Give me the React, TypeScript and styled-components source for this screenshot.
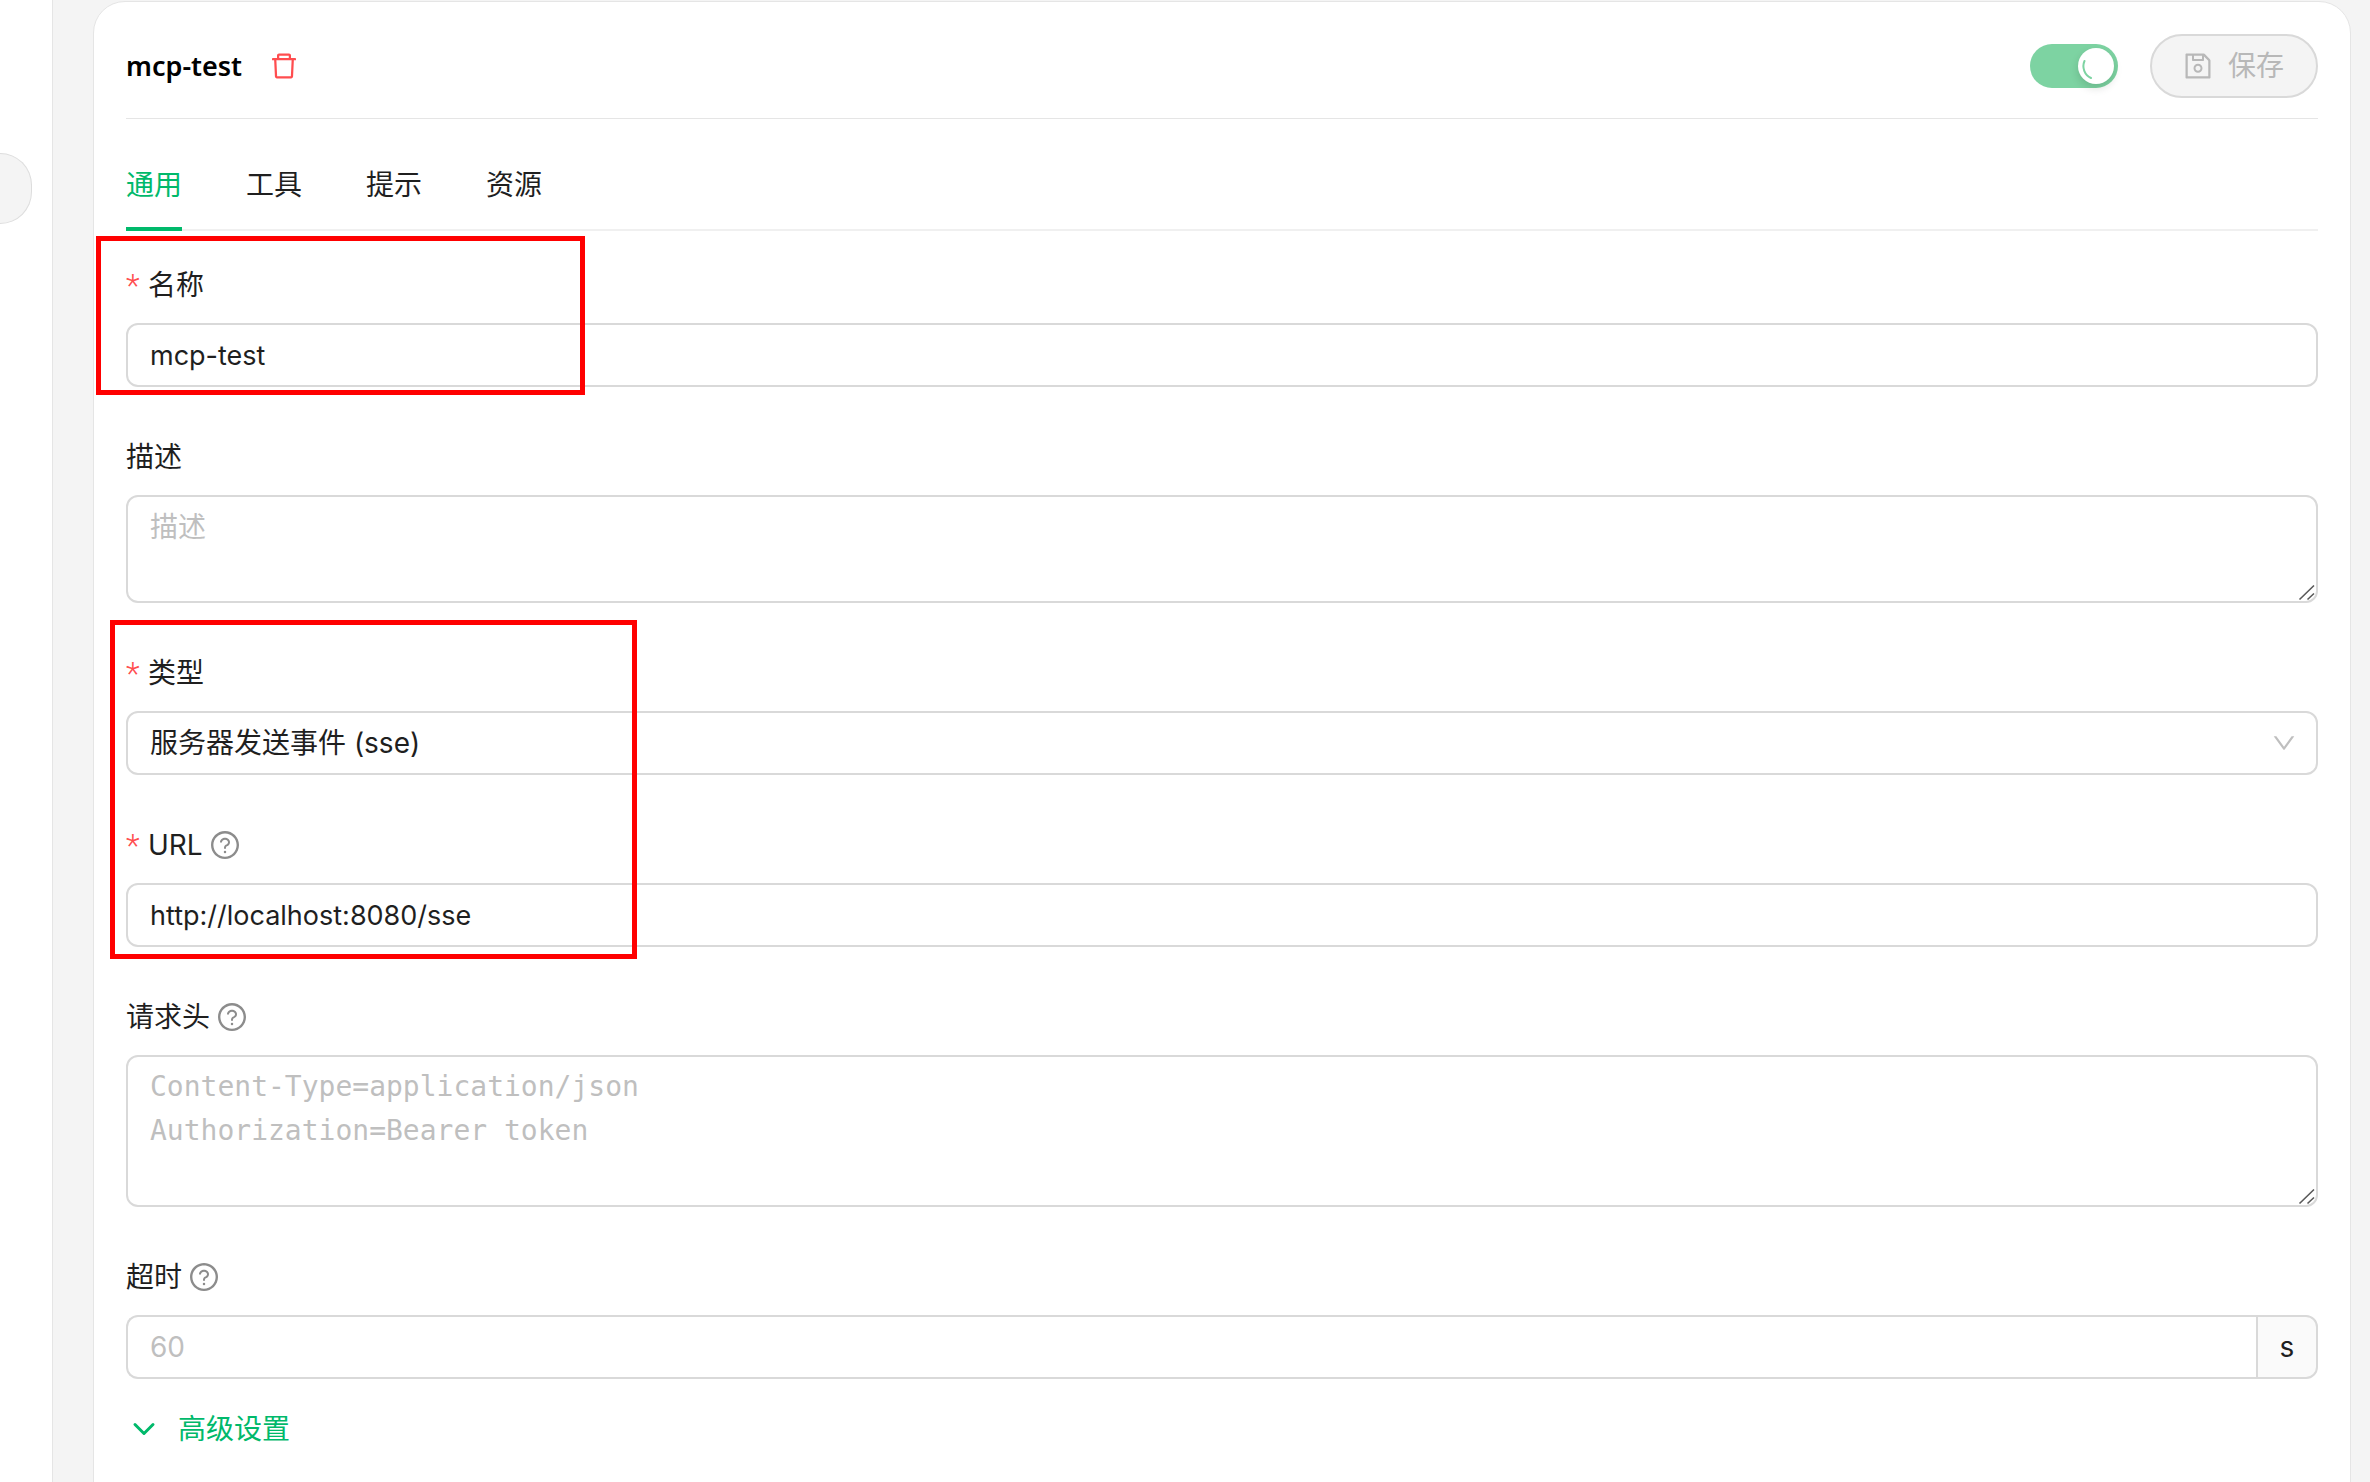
import React, { useState } from "react";
import styled, { createGlobalStyle, css } from "styled-components";
import { ChevronDown } from "lucide-react";
import {
  AiOutlineDelete,
  AiOutlineDown,
  AiOutlineQuestionCircle,
  AiOutlineSave,
} from "react-icons/ai";

const color = {
  page: "#f4f4f4",
  card: "#ffffff",
  line: "#e5e5e5",
  border: "#d9d9d9",
  text: "#1f1f1f",
  muted: "#bfbfbf",
  icon: "#8c8c8c",
  primary: "#00b96b",
  danger: "#ff4d4f",
  mark: "#ff0000",
};

const sans = `Inter, "Noto Sans CJK SC", sans-serif`;
const mono = `"DejaVu Sans Mono", monospace`;
const tightBox = "64 64 896 896";

const GlobalStyle = createGlobalStyle`
  *, *::before, *::after { box-sizing: border-box; }
  html, body, #root { height: 100%; }
  body {
    margin: 0;
    overflow: hidden;
    background: ${color.page};
    color: ${color.text};
    font-family: ${sans};
    font-size: 28px;
    line-height: 44px;
  }
  button, input, select, textarea { font: inherit; color: inherit; }
`;

const Layout = styled.div`
  display: flex;
  height: 100vh;
  overflow: hidden;
`;

const Sidebar = styled.aside`
  flex: none;
  width: 53px;
  padding-top: 153px;
  background: ${color.card};
  border-right: 1px solid ${color.line};
`;

const SidebarItem = styled.div`
  width: 32px;
  height: 71px;
  background: ${color.page};
  border: 1px solid #dddddd;
  border-left: 0;
  border-radius: 0 32px 32px 0;
`;

const Main = styled.main`
  flex: 1;
  min-width: 0;
  padding: 1px 19px 0 40px;
`;

const Card = styled.section`
  height: calc(100vh + 40px);
  padding: 32px 32px 0;
  background: ${color.card};
  border: 1px solid ${color.line};
  border-radius: 32px;
`;

const Header = styled.header`
  display: flex;
  align-items: center;
  justify-content: space-between;
  padding-bottom: 20px;
  border-bottom: 1px solid ${color.line};
`;

const HeaderGroup = styled.div<{ $gap: number }>`
  display: flex;
  align-items: center;
  gap: ${(p) => p.$gap}px;
`;

const Title = styled.h1`
  margin: 0;
  color: #000000;
  font-family: "Noto Sans", sans-serif;
  font-size: 27px;
  font-weight: 600;
  line-height: 44px;
`;

const IconButton = styled.button`
  display: flex;
  padding: 0;
  background: none;
  border: 0;
  color: ${color.danger};
  font-size: 28px;
`;

const Switch = styled.label`
  position: relative;
  display: block;
  width: 88px;
  height: 44px;
  padding: 4px;
  background: #7dd3a2;
  border-radius: 22px;
`;

const SwitchInput = styled.input`
  position: absolute;
  inset: 0;
  margin: 0;
  opacity: 0;
`;

const Knob = styled.span`
  display: block;
  width: 36px;
  height: 36px;
  margin-left: auto;
  background: #ffffff;
  border-radius: 50%;
  box-shadow: 0 4px 8px rgba(0, 35, 11, 0.15);
`;

const Spinner = styled.svg`
  display: block;
  width: 36px;
  height: 36px;
`;

const SaveButton = styled.button`
  display: flex;
  align-items: center;
  gap: 16px;
  height: 64px;
  padding: 0 32px;
  background: #f4f4f4;
  border: 2px solid ${color.border};
  border-radius: 32px;
  &:disabled { color: #b8b8b8; }
`;

const Tabs = styled.div`
  display: flex;
  gap: 64px;
  margin-top: 20px;
  box-shadow: inset 0 -2px #f0f0f0;
`;

const Tab = styled.button<{ $active: boolean }>`
  padding: 24px 0 20px;
  background: none;
  border: 0;
  border-bottom: 4px solid ${(p) => (p.$active ? color.primary : "transparent")};
  color: ${(p) => (p.$active ? color.primary : color.text)};
`;

const Form = styled.form`
  display: flex;
  flex-direction: column;
  gap: 48px;
  padding-top: 32px;
`;

const Marked = styled.div`
  position: relative;
  display: flex;
  flex-direction: column;
  gap: 48px;
`;

const Mark = styled.span<{ $inset: string; $width: number }>`
  position: absolute;
  inset: ${(p) => p.$inset};
  width: ${(p) => p.$width}px;
  border: 5px solid ${color.mark};
  pointer-events: none;
`;

const FieldBox = styled.div`
  display: flex;
  flex-direction: column;
  gap: 16px;
`;

const Label = styled.label`
  display: flex;
  align-items: center;
  gap: 8px;
  height: 44px;
`;

const Star = styled.span`
  width: 14px;
  color: ${color.danger};
  font-family: Roboto, sans-serif;
  font-size: 32px;
  font-weight: 300;
`;

const HelpIcon = styled(AiOutlineQuestionCircle)`
  color: ${color.icon};
`;

const control = css`
  display: block;
  width: 100%;
  margin: 0;
  background: ${color.card};
  border: 2px solid ${color.border};
  border-radius: 12px;
  outline: none;
  &::placeholder { color: ${color.muted}; opacity: 1; }
`;

const Input = styled.input`
  ${control}
  height: 64px;
  padding: 0 22px;
  font-size: 27px;
`;

const TextAreaWrap = styled.div`
  position: relative;
`;

const TextAreaBox = styled.textarea<{ $height: number; $mono?: boolean }>`
  ${control}
  height: ${(p) => p.$height}px;
  padding: 8px 22px;
  resize: vertical;
  ${(p) => p.$mono && `font-family: ${mono};`}
  &::-webkit-resizer { background: transparent; }
`;

const Grip = styled.svg`
  position: absolute;
  right: 0;
  bottom: 0;
  width: 20px;
  height: 20px;
  pointer-events: none;
`;

const SelectWrap = styled.div`
  display: grid;
  align-items: center;
  & > * { grid-area: 1 / 1; }
`;

const Select = styled.select`
  ${control}
  height: 64px;
  padding: 0 22px;
  appearance: none;
`;

const SelectArrow = styled(AiOutlineDown)`
  justify-self: end;
  margin-right: 22px;
  color: ${color.muted};
  font-size: 24px;
  pointer-events: none;
`;

const InputGroup = styled.div`
  display: flex;
`;

const GroupInput = styled(Input)`
  flex: 1;
  min-width: 0;
  border-right: 0;
  border-radius: 12px 0 0 12px;
  font-size: 28px;
`;

const Addon = styled.span`
  display: flex;
  align-items: center;
  justify-content: center;
  width: 62px;
  background: #fafafa;
  border: 2px solid ${color.border};
  border-radius: 0 12px 12px 0;
`;

const Advanced = styled.button`
  display: flex;
  align-items: center;
  gap: 16px;
  margin-top: 28px;
  padding: 0;
  background: none;
  border: 0;
  color: ${color.primary};
`;

type FieldProps = {
  id: string;
  label: string;
  required?: boolean;
  help?: boolean;
  children: React.ReactNode;
};

function Field({ id, label, required, help, children }: FieldProps) {
  return (
    <FieldBox>
      <Label htmlFor={id}>
        {required && <Star>*</Star>}
        {label}
        {help && <HelpIcon viewBox={tightBox} />}
      </Label>
      {children}
    </FieldBox>
  );
}

type TextAreaProps = {
  id: string;
  placeholder: string;
  height: number;
  monospace?: boolean;
};

function TextArea({ id, placeholder, height, monospace }: TextAreaProps) {
  return (
    <TextAreaWrap>
      <TextAreaBox id={id} placeholder={placeholder} $height={height} $mono={monospace} />
      <Grip viewBox="0 0 20 20" fill="none" stroke="#595959" strokeWidth="1.6" aria-hidden="true">
        <path d="M1.5 16.5L16 2.5M9.5 16.5L16 10.5" />
      </Grip>
    </TextAreaWrap>
  );
}

const tabs = ["通用", "工具", "提示", "资源"];

export default function App() {
  const [active, setActive] = useState(tabs[0]);

  return (
    <>
      <GlobalStyle />
      <Layout>
        <Sidebar>
          <SidebarItem />
        </Sidebar>
        <Main>
          <Card>
            <Header>
              <HeaderGroup $gap={28}>
                <Title>mcp-test</Title>
                <IconButton type="button" aria-label="Delete">
                  <AiOutlineDelete viewBox={tightBox} />
                </IconButton>
              </HeaderGroup>
              <HeaderGroup $gap={32}>
                <Switch>
                  <SwitchInput type="checkbox" role="switch" aria-label="Enabled" defaultChecked />
                  <Knob>
                    <Spinner viewBox="0 0 36 36" fill="none" stroke="#7dd3a2" strokeWidth="2" strokeLinecap="round">
                      <path d="M6.5 13A13 13 0 0 0 13 30" />
                    </Spinner>
                  </Knob>
                </Switch>
                <SaveButton type="button" disabled>
                  <AiOutlineSave viewBox={tightBox} />
                  保存
                </SaveButton>
              </HeaderGroup>
            </Header>

            <Tabs role="tablist">
              {tabs.map((tab) => (
                <Tab
                  key={tab}
                  type="button"
                  role="tab"
                  aria-selected={tab === active}
                  $active={tab === active}
                  onClick={() => setActive(tab)}
                >
                  {tab}
                </Tab>
              ))}
            </Tabs>

            <Form>
              <Marked>
                <Field id="name" label="名称" required>
                  <Input id="name" defaultValue="mcp-test" />
                </Field>
                <Mark $inset="-27px auto -8px -30px" $width={489} />
              </Marked>

              <Field id="description" label="描述">
                <TextArea id="description" placeholder="描述" height={108} />
              </Field>

              <Marked>
                <Field id="type" label="类型" required>
                  <SelectWrap>
                    <Select id="type" defaultValue="sse">
                      <option value="sse">服务器发送事件 (sse)</option>
                    </Select>
                    <SelectArrow viewBox={tightBox} />
                  </SelectWrap>
                </Field>
                <Field id="url" label="URL" required help>
                  <Input id="url" defaultValue="http://localhost:8080/sse" />
                </Field>
                <Mark $inset="-31px auto -12px -16px" $width={527} />
              </Marked>

              <Field id="headers" label="请求头" help>
                <TextArea
                  id="headers"
                  placeholder={"Content-Type=application/json\nAuthorization=Bearer token"}
                  height={152}
                  monospace
                />
              </Field>

              <Field id="timeout" label="超时" help>
                <InputGroup>
                  <GroupInput id="timeout" placeholder="60" />
                  <Addon>s</Addon>
                </InputGroup>
              </Field>
            </Form>

            <Advanced type="button">
              <ChevronDown size={36} />
              高级设置
            </Advanced>
          </Card>
        </Main>
      </Layout>
    </>
  );
}
